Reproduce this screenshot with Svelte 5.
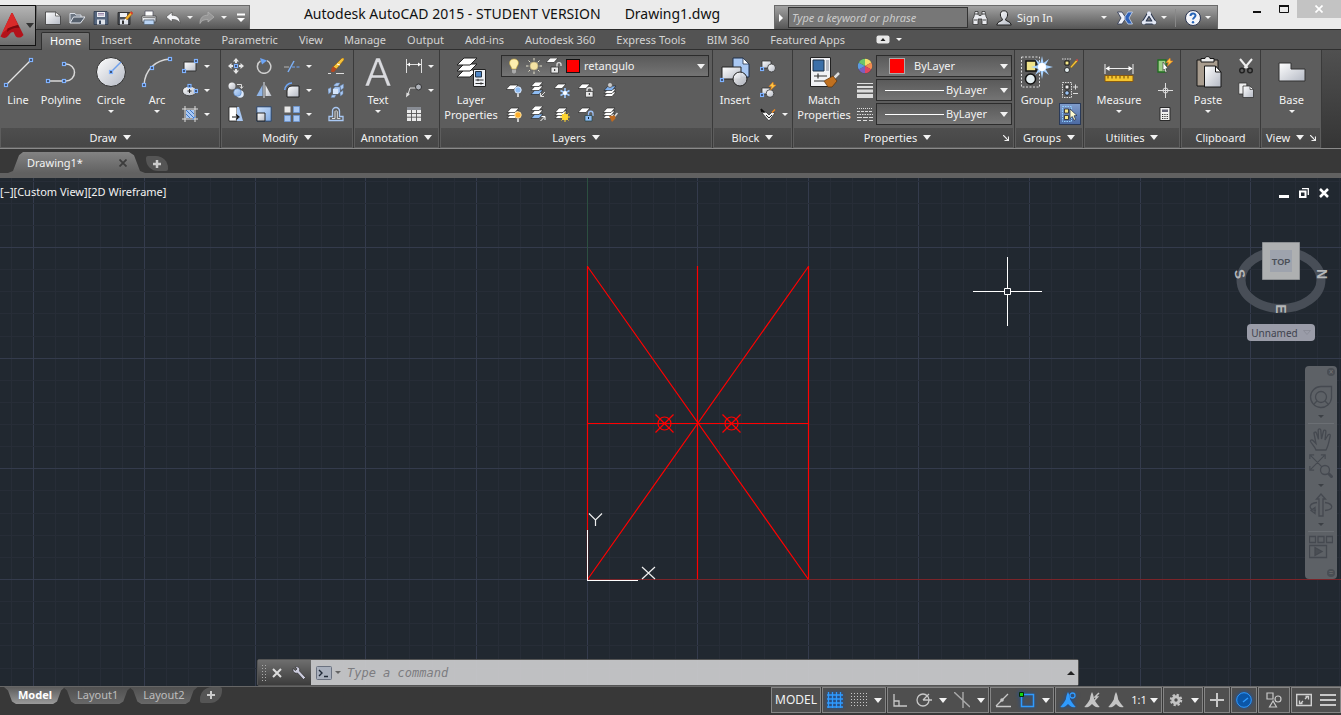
<script>
  // Inner markup of every icon. Small ones live in a 16x16 box, big ones in 32x32.
  const grip = (x, y) =>
    `<rect x="${x - 1.5}" y="${y - 1.5}" width="3" height="3" fill="#33415c" stroke="#7fb2ff" stroke-width="1.2"/>`;
  const sheet = (x, y, fill = '#fff') =>
    `<path d="M${x + 4} ${y}h8l-4 4.500h-8z" fill="${fill}" stroke="#2a2a2a" stroke-width=".7"/>`;
  const stack = (fill = '#fff') => sheet(1, 8, fill) + sheet(1, 5) + sheet(1, 2);
  const man = (c) =>
    `<path d="M8 0c1.500 3 1.800 5 2.200 7.500 1.500 3 3.500 5 5.500 7.500-2 .6-4 .3-5.500-1L8 12l-2.200 2c-1.500 1.300-3.500 1.600-5.500 1 2-2.500 4-4.500 5.500-7.500C6.200 5 6.500 3 8 0z" fill="${c}"/>`;

  const icons = {
    // quick access toolbar
    new: '<path d="M.5 2h10l5 4v8.500H.5z" fill="url(#metal)" stroke="#3a3a3a" stroke-width=".8"/><path d="M10.500 2v4h5z" fill="#fff" stroke="#555" stroke-width=".8"/>',
    open: '<path d="M1 13V3.500h5l1 1.500h5v2" fill="#6c7683" stroke="#d7dce4"/><path d="M1 13l3.500-6H16l-4.500 6z" fill="#56606d" stroke="#e3e7ee"/>',
    save: '<path d="M1 1.500h13l1 1V14.500H1z" fill="#56677f" stroke="#2e3a4c" stroke-width=".8"/><path d="M4 2h8v5H4z" fill="#eef0f4"/><path d="M5 3.500h6M5 5h6" stroke="#98a"/><path d="M4 9.500h8v5H4z" fill="#dfe3ea"/><path d="M6 10.500h2V14H6z" fill="#35455c"/>',
    saveas: '<path d="M1 2.500h12V14.500H1z" fill="#4a4f57" stroke="#222" stroke-width=".8"/><path d="M3 3h7v4H3z" fill="#eef0f4"/><path d="M3 9.500h8v5H3z" fill="#dfe3ea"/><path d="M5 10.500h2V14H5z" fill="#333"/><path d="M8 8.500L14 1.500l2 1.700L10 10z" fill="#f3b52b" stroke="#8a4a12" stroke-width=".6"/><path d="M14 1.500l2 1.700-1 1.200-2-1.700z" fill="#d33"/><path d="M8 8.500L7.500 11 10 10z" fill="#fff"/>',
    print: '<path d="M4 6V1h8v5" fill="#fff" stroke="#556" stroke-width=".8"/><path d="M1 6h14v6H1z" fill="url(#metal)" stroke="#444" stroke-width=".8"/><path d="M3 10h10v4.500H3z" fill="#b9d4f5" stroke="#567" stroke-width=".8"/><path d="M2 7.500h12" stroke="#888"/>',
    undo: '<path d="M1 7l6-5v3.200c5 0 8 2.300 8 8.300-1.500-3-3.500-4-8-4V12z" fill="#f4f5f8" stroke="#555" stroke-width=".7"/>',
    redo: '<path d="M15 7L9 2v3.200c-5 0-8 2.300-8 8.300 1.500-3 3.500-4 8-4V12z" fill="#969696" stroke="#b4b4b4" stroke-width=".7"/>',
    custom: '<path d="M4 4.500h8" stroke="#fff" stroke-width="2"/><path d="M4 8h8l-4 4z" fill="#fff"/>',
    // info center
    binoculars: '<path d="M3 1.500h3v3l1 1h2l1-1v-3h3l1 5 1 2v6h-5V9H6v5.500H1v-6l1-2z" fill="#e9eaee" stroke="#333" stroke-width=".8"/><path d="M2 10h3M11 10h3M3 4h3M10 4h3" stroke="#444"/>',
    user: '<path d="M8 .8c2.800 0 3.800 2 3.600 4.200C11.400 7 10.500 8 9.700 9v1.200L14 12.500l1.300 2.500H.7L2 12.500l4.300-2.300V9C5.500 8 4.600 7 4.400 5 4.200 2.800 5.200.8 8 .8z" fill="url(#metal)" stroke="#222"/>',
    exchange: '<path d="M.5 2H5l3 4.500v3L5 14H.5L4 8z" fill="#eef1f8" stroke="#2b3550" stroke-width=".8"/><path d="M15.500 2H11L8 6.500v3l3 4.500h4.500L12 8z" fill="#2f62b8" stroke="#cfdaf0" stroke-width=".8"/>',
    a360: '<path d="M8 3.500L2.500 12.500h11z" fill="none" stroke="#27344e" stroke-width="4" stroke-linejoin="round"/><path d="M8 3.500L2.500 12.500h11z" fill="none" stroke="#e4e9f5" stroke-width="2" stroke-linejoin="round"/><circle cx="8" cy="3.200" r="2" fill="#e4e9f5"/><circle cx="2.800" cy="12.500" r="2" fill="#e4e9f5"/><circle cx="13.200" cy="12.500" r="2" fill="#e4e9f5"/>',
    help: '<circle cx="8" cy="8" r="7.500" fill="#f5f6fa" stroke="#2b3550"/><path d="M5.500 6c0-3.400 5-3.400 5-.4 0 1.900-2.500 1.900-2.500 4" fill="none" stroke="#2765b8" stroke-width="2"/><circle cx="8" cy="12.200" r="1.200" fill="#2765b8"/>',
    // draw
    line: '<path d="M4 29L29 4" stroke="#e4e4e4" stroke-width="1.300"/>' + grip(4, 29) + grip(29, 4),
    polyline: '<path d="M3 25h18a8.500 8.500 0 0 0 0-17h-2" fill="none" stroke="#d8d8d8" stroke-width="1.500"/>' + grip(3, 25) + grip(19, 25) + grip(19, 8),
    circle: '<circle cx="16" cy="16" r="14.500" fill="url(#metal)" stroke="#2f2f2f"/><path d="M16 16L26 6" stroke="#6d9fee" stroke-width="1.400"/>' + grip(16, 16),
    arc: '<path d="M3 29C4 14 14 4 29 3" fill="none" stroke="#d8d8d8" stroke-width="1.500"/>' + grip(3, 29) + grip(11, 12) + grip(29, 3),
    rect: '<path d="M2 4h12v9H2z" fill="url(#metal)" stroke="#333"/>' + grip(2, 13) + grip(14, 3),
    ellipse: '<ellipse cx="7.500" cy="9" rx="7" ry="4.800" fill="url(#metal)" stroke="#333" stroke-width=".8"/><path d="M5.500 9h4M7.500 7v4" stroke="#222"/>' + grip(7.5, 4) + grip(14, 9),
    hatch: '<path d="M3 0v16M13 0v16M0 3h16M0 13h16" stroke="#e0e0e0"/><path d="M4 4h8v8H4z" fill="#a9c8f3"/><path d="M4 8l4 4M4 4l8 8M8 4l4 4" stroke="#3f76c4"/><path d="M10 14l4-4" stroke="#5c9bf5"/>',
    // modify
    move: '<path d="M8 0l3 3.500H9V5H7V3.500H5zM8 16l3-3.500H9V11H7v1.500H5zM0 8l3.500-3v2H5v2H3.500v2zM16 8l-3.500-3v2H11v2h1.500v2z" fill="#e6e6e6"/>' + grip(8, 8),
    copy: '<circle cx="4" cy="4" r="3.500" fill="url(#metal)"/><circle cx="12" cy="12" r="3.800" fill="#dce9fb"/><circle cx="9.500" cy="10.500" r="3.800" fill="url(#blue)" stroke="#4d7cc0" stroke-width=".5"/><path d="M9 2.500h4.500V6M12 4.500l1.500 2 1.500-2" fill="none" stroke="#ddd"/>',
    stretch: '<path d="M1 1h8v14H1z" fill="#fff" stroke="#222" stroke-width=".8"/><path d="M9 1h2l4 14H9z" fill="#a9c8f3"/><path d="M4 11h6M8 8.500l3 2.500-3 2.500" fill="none" stroke="#111" stroke-width="1.200"/>',
    rotate: '<path d="M4.500 3a6.700 6.700 0 1 0 6.500-.4" fill="none" stroke="#cfcfcf" stroke-width="1.500"/><path d="M4 0l7 2.500-5 4z" fill="#6ea5f5"/>',
    mirror: '<path d="M6.500 3v11H.5z" fill="#8fb5e8"/><path d="M9.500 3v11h6z" fill="url(#metal)"/><path d="M8 0v16" stroke="#dfe6f0"/>',
    scale: '<path d="M.8.800h14.400v14.400H.8z" fill="url(#blue)" stroke="#2c4468"/><path d="M1 7h8v8H1z" fill="url(#metal)" stroke="#222"/>',
    trim: '<path d="M0 9h5" stroke="#b5b5b5"/><path d="M8 9h8" stroke="#6ea5f5" stroke-dasharray="3 1.500"/><path d="M4 14L10 3" stroke="#7db0f5" stroke-width="1.500"/>',
    fillet: '<path d="M3 15V9c0-3 2-5 5-5h7v11z" fill="url(#metal)" stroke="#222"/><path d="M.8 8C1 4 4 1 8 1" fill="none" stroke="#6ea5f5" stroke-width="1.600"/>',
    array: '<path d="M.5.500h6v6h-6z" fill="#e8e8e8"/><path d="M9.500.500h6v6h-6zM.5 9.500h6v6h-6zM9.500 9.500h6v6h-6z" fill="#a9c8f3" stroke="#6b97d6" stroke-width=".8"/>',
    erase: '<path d="M5 9L14 0h2v2L8.500 11z" fill="#f5c13a" stroke="#8a5a10" stroke-width=".6"/><path d="M9 6l3 1" stroke="#fff"/><path d="M5 8.500L8.500 11 6 14H3.500c-1-1 0-4 1.500-5.500z" fill="#b5471f"/><path d="M0 15.500h3M8 15.500h8" stroke="#ddd"/>',
    explode: '<path d="M6 3l2.500-2H12l-2 3H6zM12 4l3.500-2v4L13 8zM5 7l2-2h5v5l-2 2H5zM0 7l3-1.500V10L.5 12zM4 13h4l-1.500 2.500H3zM12 10.500l3-2V12l-2.500 2z" fill="#a9c8f3" stroke="#6486b3" stroke-width=".5"/><path d="M5 7h5v5H5z" fill="#d6e6fb"/>',
    offset: '<path d="M1 14.500h14v-4h-3.500V5a3.500 3.500 0 0 0-7 0v5.500H1z" fill="none" stroke="#a9c8f3" stroke-width="1.300"/><path d="M4 12.500h3V5.500a1.300 1.300 0 0 1 2.300 0v7h3" fill="none" stroke="#ddd"/>',
    // annotation
    text: '<path d="M3 30L14 2h4l11 28h-4l-3-8H10l-3 8zM11 19h10L16 6z" fill="#d9dade" stroke="#444" stroke-width=".4"/>',
    dim: '<path d="M.5 1v14M15.500 1v14" stroke="#ddd"/><path d="M1 6.500h14" stroke="#ddd"/><path d="M1 6.500l3-2v4zM15 6.500l-3-2v4z" fill="#fff"/>',
    leader: '<path d="M1.500 14L4 6h6" fill="none" stroke="#ddd"/><path d="M0 15.500l.5-5L4 12z" fill="#ddd"/><circle cx="12.500" cy="5" r="3" fill="#aeb2ba" stroke="#333"/>',
    table: '<path d="M1 1h14v14H1z" fill="#e9e9e9"/><path d="M1 1h14v3H1z" fill="#888c94"/><path d="M1 7.500h14M1 11.200h14M5.500 4v11M10.500 4v11" stroke="#555" stroke-width=".9"/>',
    // layers
    layerprops: '<path d="M9 14h13l-7 7H2z" fill="#fff" stroke="#222"/><path d="M9 8h13l-7 7H2z" fill="#fff" stroke="#222"/><path d="M9 2h13l-7 7H2z" fill="#fff" stroke="#222"/><path d="M18.500 13.500h12v17h-12z" fill="#eef0f4" stroke="#222"/><path d="M20.500 15.500h6v5.500h-6z" fill="#4f86c6" stroke="#234"/><path d="M20.500 24h8M20.500 27.500h8M23 22.800v2.400M26 26.300v2.400" stroke="#333"/>',
    bulb: '<path d="M8 1c4.500 0 5.500 4.500 3.300 7L10 11H6L4.700 8C2.500 5.500 3.500 1 8 1z" fill="#fdeeb0" stroke="#c9a93c" stroke-width=".6"/><path d="M6 11.500h4v3l-2 1.300-2-1.300z" fill="#aaa"/>',
    sun: '<path d="M8 0v16M0 8h16M2.500 2.500l11 11M13.500 2.500l-11 11" stroke="#e6e3cf" stroke-dasharray="2.500 11"/><circle cx="8" cy="8" r="4" fill="#f5e3a3" stroke="#b8a878" stroke-width=".7"/>',
    unlock: sheet(0, 0) + '<path d="M11 9V6.500c0-2.500 4-2.500 4 0V8" fill="none" stroke="#ddd" stroke-width="1.300"/><path d="M5 9h7.500v6H5z" fill="#e8e8e8" stroke="#333" stroke-width=".8"/><path d="M8.700 11v2" stroke="#222"/>',
    layoff: sheet(0, 3) + '<circle cx="12" cy="8" r="3.200" fill="#8dbbf2" stroke="#dcebff"/><path d="M12 11.500V15" stroke="#ccc" stroke-width="2"/>',
    layiso: sheet(1, 8, '#8dbbf2') + sheet(1, 4) + sheet(1, 0) + '<path d="M15 10l-4 4M10.500 11v3.500H14" fill="none" stroke="#ddd"/>',
    layfrz: sheet(0, 2) + '<path d="M11 6v10M6.500 8.500l9 5M6.500 13.500l9-5" stroke="#9cc8ff" stroke-width="1.600"/><circle cx="11" cy="11" r="2" fill="#fff"/>',
    laylock: sheet(0, 2) + '<path d="M9 10V8c0-3 5-3 5 0v2" fill="none" stroke="#ddd" stroke-width="1.400"/><path d="M7.500 9.500h7.500V15H7.500z" fill="#e8e8e8" stroke="#333" stroke-width=".7"/><path d="M11.300 11v2" stroke="#222"/>',
    laycur: sheet(2, 10) + sheet(2, 7) + sheet(2, 4, '#7fb0ee') + '<circle cx="8" cy="3" r="2.500" fill="#ccc" stroke="#444" stroke-width=".7"/>',
    layon: stack() + '<circle cx="12" cy="9" r="3.200" fill="#ffb02e" stroke="#ffe2a0"/><path d="M12 12.500V16" stroke="#ccc" stroke-width="2"/>',
    layuniso: sheet(1, 8, '#8dbbf2') + sheet(1, 4) + sheet(1, 0) + '<path d="M10.500 15l4-4M11.500 10.500H15V14" fill="none" stroke="#fff"/>',
    laythaw: stack() + '<circle cx="11" cy="11" r="3.200" fill="#ffd52e"/><path d="M11 6v10M6 11h10M7.500 7.500l7 7M14.500 7.500l-7 7" stroke="#ffd52e"/>',
    layunlock: sheet(0, 2) + '<path d="M10.500 10V7.500c0-3 4.500-3 4.500 0V10" fill="none" stroke="#9cc0f5" stroke-width="1.300"/><path d="M7 9.500h7V15H7z" fill="#8dbbf2" stroke="#244" stroke-width=".7"/><path d="M10.500 11v2" stroke="#123"/>',
    laymatch: stack() + '<path d="M15.500 7l-3 3.500" stroke="#ddd" stroke-width="1.500"/><path d="M7 10l6-.5.5 3-3.500 3.500z" fill="#c06a1f"/>',
    // block
    insert: '<path d="M14 2h10l6 6v13H14z" fill="#a9c8f3" stroke="#1f2f48"/><path d="M24 2v6h6z" fill="#fff" stroke="#1f2f48" stroke-width=".8"/><path d="M3 11h19v12H3z" fill="url(#metal)" stroke="#222"/><circle cx="21" cy="23" r="7" fill="url(#metal)" stroke="#222" fill-opacity=".9"/>' + grip(3, 24),
    create: '<path d="M2 3h9v7H2z" fill="url(#metal)" stroke="#333" stroke-width=".8"/><circle cx="11.500" cy="10" r="4" fill="url(#metal)" stroke="#333" stroke-width=".8"/>' + grip(2, 11),
    editblock: '<path d="M2 6h8v6H2z" fill="url(#metal)" stroke="#333" stroke-width=".8"/><circle cx="10" cy="11.500" r="3.800" fill="url(#metal)" stroke="#333" stroke-width=".8"/><path d="M13 0l-4 4.500h2.500L10.500 8l5.500-5h-2.500z" fill="#ffc845" stroke="#e07b1a" stroke-width=".6"/>' + grip(2, 13),
    attr: '<path d="M1 3l4 4M1 3l1 3" stroke="#111" stroke-width="1.500"/><path d="M2 7l4-1 3 3 3-3 3 1-6 8z" fill="#f2f2f2" stroke="#333" stroke-width=".8"/><path d="M6 9l3 3 3-3" fill="none" stroke="#222"/><path d="M11.500 6l3-3 1 1-3 3z" fill="#f58b1f"/>',
    // properties
    match: '<path d="M2.500 1.500h20v29h-20z" fill="#f1f2f5" stroke="#222"/><path d="M5 4h11v11H5z" fill="#3b6fa8" stroke="#1c3147"/><path d="M18 4h3v11h-3z" fill="#b7bbc4"/><path d="M6 20h13M6 25h10M10 17.500v5" stroke="#333" stroke-width="1.200"/><path d="M31 17l-5 5" stroke="#ddd" stroke-width="2.500"/><path d="M16 25l9-5 4 5-5 6h-4z" fill="#c0701f" stroke="#5a3008" stroke-width=".7"/>',
    wheel: '<circle cx="8" cy="8" r="7.500" fill="#444"/><path d="M8 8V.8a7 7 0 0 1 6.300 3.700z" fill="#f4e06a"/><path d="M8 8l6.300-3.500a7 7 0 0 1-.1 7z" fill="#f28b50"/><path d="M8 8l6.200 3.500A7 7 0 0 1 8 15.200z" fill="#e2465f"/><path d="M8 8v7.200a7 7 0 0 1-6.300-3.700z" fill="#7a5fc0"/><path d="M8 8l-6.300 3.500a7 7 0 0 1 .1-7z" fill="#5b9be0"/><path d="M8 8L1.800 4.500A7 7 0 0 1 8 .8z" fill="#6cc56a"/>',
    weight: '<path d="M0 1.500h16" stroke="#ddd"/><path d="M0 5h16" stroke="#ddd" stroke-width="2"/><path d="M0 9h16" stroke="#ddd" stroke-width="3"/><path d="M0 14h16" stroke="#ddd" stroke-width="4"/>',
    linetype: '<g stroke="#ddd"><path d="M0 2.500h16" stroke-dasharray="1 1"/><path d="M0 5.500h16" stroke-dasharray="3 1"/><path d="M0 8.500h16" stroke-dasharray="1.500 1"/><path d="M0 11.500h16" stroke-dasharray="5 1"/><path d="M0 14.500h16" stroke-dasharray="4 2"/></g>',
    // groups
    group: '<path d="M.5 1h18v30H.5z" fill="none" stroke="#ddd" stroke-dasharray="2 1.500"/><path d="M5 5h10v10H5z" fill="#f0e48a" stroke="#111" stroke-width="1.500"/><circle cx="9.500" cy="23" r="5" fill="#e4eef0" stroke="#111" stroke-width="1.500"/><path d="M21 0l1.500 7L28 3l-3.500 6 7.500 2-7.500 2L28 19l-5.500-4L21 23l-1.500-8L14 19l3.500-6-7.500-2 7.500-2L14 3l5.500 4z" fill="#a8d2ff"/><circle cx="21" cy="11" r="4" fill="#fff"/>',
    ungroup: '<path d="M0 1h9" stroke="#ddd" stroke-dasharray="1.500 1"/><path d="M3 3h4v4H3z" fill="#f5e88b" stroke="#111"/><circle cx="5" cy="12" r="2.500" fill="#e4eef0" stroke="#111" stroke-width=".8"/><path d="M8 9l6-7 1.500 1.500-6 6.500z" fill="#f0c23a" stroke="#7a5210" stroke-width=".5"/><path d="M14 2l1.500 1.500 1-1L15 .8z" fill="#d44"/>',
    groupedit: '<path d="M.5.500h9v15h-9z" fill="none" stroke="#ddd" stroke-dasharray="1.500 1"/><path d="M3 3h4v4H3z" fill="#eee" stroke="#222"/><circle cx="5" cy="11" r="2.300" fill="#9cc4f5" stroke="#222"/><path d="M11 5h5M13.500 2.500v5M11 11.500h5" stroke="#ddd"/>',
    groupsel: '<path d="M.5.500h9v15h-9z" fill="none" stroke="#8fd0ff" stroke-dasharray="1.500 1"/><path d="M2.500 3h4v4h-4zM2.500 9.500h4v4h-4z" fill="#f5e88b" stroke="#222" stroke-width=".8"/><path d="M8 3l7 6.500-3 .3 1.700 3.700-1.700.8-1.700-3.800L8 12.500z" fill="#fffbd0" stroke="#1b2a44" stroke-width=".7"/>',
    // utilities
    measure: '<path d="M2 8v10M30 8v10M3 12.500h26" stroke="#eee"/><path d="M2.500 12.500l4-2.500v5zM29.500 12.500l-4-2.500v5z" fill="#fff"/><path d="M2 19.500h28v6H2z" fill="#f3c52f" stroke="#8a5a10"/><path d="M5 20v2.500M9 20v2.500M13 20v2.500M17 20v2.500M21 20v2.500M25 20v2.500" stroke="#6a4408"/>',
    qselect: '<path d="M1 2h8v12H1z" fill="#9fcf8a" stroke="#1f6f1f" stroke-width="1.300"/><path d="M13 0l-4 4.500h2.500L10.500 8l5.500-5h-2.500z" fill="#ffc845" stroke="#e07b1a" stroke-width=".6"/><path d="M6 4l5 6.500-2.200.2L10 14l-1.500.6L7.200 11 6 12.500z" fill="#fff" stroke="#333" stroke-width=".6"/>',
    point: '<path d="M8.500 1v15M1 8.500h15" stroke="#ddd"/><circle cx="8.500" cy="8.500" r="2.500" fill="none" stroke="#ddd"/>',
    calc: '<path d="M3 1.500h10v13H3z" fill="#f0f0f0" stroke="#2a2a2a"/><path d="M5 3.500h6V6H5z" fill="#667"/><path d="M5 8.500h6M5 10.500h6M5 12.500h6" stroke="#333" stroke-dasharray="1.300 1"/>',
    // clipboard
    paste: '<path d="M5 4h21v26H5z" fill="#a89c8e" stroke="#161616"/><path d="M9 2.500h4c0-2.500 5-2.500 5 0h4V6H9z" fill="#eee" stroke="#161616"/><path d="M12.500 10h11l5.500 6v15H12.500z" fill="url(#metal)" stroke="#161616"/><path d="M23.500 10v6H29z" fill="#fff" stroke="#161616"/>',
    cut: '<path d="M2 1l7.500 9M14 1L6.500 10" stroke="#eee" stroke-width="2"/><circle cx="4" cy="12.500" r="2.300" fill="none" stroke="#222" stroke-width="1.500"/><circle cx="12" cy="12.500" r="2.300" fill="none" stroke="#222" stroke-width="1.500"/>',
    copyclip: '<path d="M.8 1h8v11h-8z" fill="#eee" stroke="#333" stroke-width=".8"/><path d="M5 4h7l3.500 3.500V15.500H5z" fill="url(#metal)" stroke="#333" stroke-width=".8"/><path d="M12 4v3.500h3.500z" fill="#fff" stroke="#333" stroke-width=".7"/>',
    base: '<path d="M3 7h12v6h14v12H3z" fill="url(#metal)" stroke="#333"/>',
    // navigation bar
    steer: '<path d="M12 1.500h10.500V13A10.500 10.500 0 1 1 12 1.500z"/><circle cx="12" cy="12" r="5.500"/><path d="M4.500 19.500l3.500-3.500M19.500 19.500L16 16"/>',
    pan: '<path d="M7 23c-1-3-4-6-5.500-8.500-.5-1.500 1.500-2 2.500-1l3 3L5 6.500c-.3-1.800 2-2 2.500-.3l2 6-.3-9c0-1.700 2.400-1.700 2.600 0l.7 8.800 2-8c.4-1.500 2.500-1 2.400.5L16 13l3-5c1-1.300 2.700-.5 2.200 1-1 4-1.700 10-4.200 14z"/>',
    zoomext: '<path d="M2 2l17 17M18 2L2 18M1 6V1h5M14 1h5v5M1 14v5h5" transform="scale(.85)"/><circle cx="16" cy="16" r="4.500" fill="#5d6166"/><path d="M19.500 19.500l4 4" stroke-width="3"/>',
    orbit: '<path d="M10 23V6H7.500L12 1l4.500 5H14v17z"/><path d="M16 9.500c9 1.500 9 7 0 8M8 9.500c-9 1-9 7-1 8M6 14.500v6l-4-3z"/>',
    motion: '<path d="M.5 1.500h6v6h-6zM9 1.500h6v6H9zM17.500 1.500h6v6h-6zM.5 10.500h17v12h-17z"/><path d="M6 12.500v8l7-4z" fill="#4a4e54"/>',
    // status bar
    gridon: '<path d="M1.500 0v16M5.500 0v16M9.500 0v16M13.500 0v16M0 3h16M0 7h16M0 11h16M0 15h16" stroke="#2f9bff" stroke-width="1.300"/>',
    snap: '<path d="M0 1.500h16M0 4.500h16M0 7.500h16M0 10.500h16M0 13.500h16" stroke="#c8c8c8" stroke-dasharray="1 2"/>',
    ortho: '<path d="M2 2v12h13M2 9h5v5" fill="none" stroke="#c8c8c8" stroke-width="1.300"/>',
    polar: '<circle cx="7" cy="8" r="6" fill="none" stroke="#c8c8c8" stroke-width="1.300"/><path d="M7 8h9M7 8l6-6" stroke="#c8c8c8" stroke-width="1.300"/>',
    iso: '<path d="M0 0l16 15M9 0v16" stroke="#aaa" stroke-width="1.400"/>',
    otrack: '<path d="M1 14.500h15M1 14L13 2" stroke="#c8c8c8" stroke-width="1.300"/><circle cx="7" cy="8" r="1.800" fill="#c8c8c8"/>',
    osnap: '<path d="M2.500 2.500h12v12h-12z" fill="none" stroke="#2f9bff" stroke-width="1.500"/><path d="M.5.500h4v4h-4z" fill="#12d612" stroke="#052b05"/>',
    annovis: man('#2f9bff') + '<circle cx="12.500" cy="3.500" r="2.500" fill="none" stroke="#2f9bff" stroke-width="1.300"/>',
    annoauto: man('#c4c4c4') + '<path d="M15 1l-4 4h2.500L10 9" fill="none" stroke="#c4c4c4" stroke-width="1.500"/>',
    annoscale: man('#c4c4c4'),
    gear: '<circle cx="8" cy="8" r="5" fill="none" stroke="#c4c4c4" stroke-width="2.500" stroke-dasharray="2.200 1.727"/><circle cx="8" cy="8" r="3.200" fill="none" stroke="#c4c4c4" stroke-width="3"/>',
    plus: '<path d="M8 1v14M1 8h14" stroke="#c8c8c8" stroke-width="2"/>',
    hardware: '<circle cx="8" cy="8" r="7.300" fill="#0b56a8" stroke="#2f9bff"/><path d="M7 10l5-4" stroke="#2f9bff" stroke-width="1.500"/>',
    isolate: '<path d="M1 1h6v6H1zM7 9l-3.500 6h7z" fill="none" stroke="#c8c8c8" stroke-width="1.200"/><circle cx="12" cy="7" r="3" fill="none" stroke="#c8c8c8" stroke-width="1.200"/>',
    clean: '<path d="M.7 2.500h14.600v11H.7z" fill="none" stroke="#d0d0d0" stroke-width="1.400"/><path d="M9 7l3-3M9.500 4.500h3v3M7 9l-3 3M3.500 8.500v3h3" fill="none" stroke="#d0d0d0" stroke-width="1.300"/>',
    menu: '<path d="M0 3h16M0 8h16M0 13h16" stroke="#c8c8c8" stroke-width="2"/>'
  };

  const tabs = ['Home', 'Insert', 'Annotate', 'Parametric', 'View', 'Manage', 'Output', 'Add-ins', 'Autodesk 360', 'Express Tools', 'BIM 360', 'Featured Apps'];
  const layerTools = ['layoff', 'layiso', 'layfrz', 'laylock', 'laycur', 'layon', 'layuniso', 'laythaw', 'layunlock', 'laymatch'];
  const layouts = ['Model', 'Layout1', 'Layout2'];

  const statusGroups = [
    ['gridon', 'snap', '>'],
    ['ortho', 'polar', '>', 'iso', '>'],
    ['otrack', 'osnap', '>'],
    ['annovis', 'annoauto', 'annoscale', '1:1'],
    ['gear', '>'],
    ['plus'],
    ['hardware'],
    ['isolate'],
    ['clean', 'menu']
  ];
  const litItems = ['gridon', 'osnap', 'annovis', 'hardware'];

  let activeTab = $state('Home');
  let activeLayout = $state('Model');
  let command = $state('');

  // drawing grid, counted from the UCS origin
  const origin = { x: 587, y: 401 };
  const step = 22.13;
  let canvasWidth = $state(1341);
  let canvasHeight = $state(508);

  function gridLines(start, size, snap) {
    const lines = [];
    for (let i = -Math.floor(start / step); start + i * step < size; i++) {
      lines.push({ at: snap(start + i * step) + 0.5, major: i % 5 === 0 });
    }
    return lines;
  }

  let columns = $derived(gridLines(origin.x, canvasWidth, Math.floor));
  let rows = $derived(gridLines(origin.y, canvasHeight, Math.round));
</script>

{#snippet icon(name, size)}
  <svg width={size} height={size} viewBox="0 0 {size} {size}" aria-hidden="true">{@html icons[name]}</svg>
{/snippet}

{#snippet big(name, label, caret)}
  <button class="big">
    {@render icon(name, 32)}
    <span>{label}</span>
    {#if caret}<i class="caret"></i>{/if}
  </button>
{/snippet}

{#snippet small(name, caret)}
  <button class="small" aria-label={name}>
    <span class="glyph">{@render icon(name, 16)}</span>
    {#if caret}<i class="caret"></i>{/if}
  </button>
{/snippet}

{#snippet title(label, caret, launcher)}
  <footer>
    <span>{label}</span>
    {#if caret}<i class="caret wide"></i>{/if}
    {#if launcher}
      <svg class="launcher" width="6" height="6" viewBox="0 0 6 6"><path d="M0 0l5 5M5.500 1.500v4h-4" fill="none" stroke="#eee" stroke-width="1.200" /></svg>
    {/if}
  </footer>
{/snippet}

<svg class="defs" width="0" height="0" aria-hidden="true">
  <defs>
    <linearGradient id="metal" x1="0" y1="0" x2="1" y2="1">
      <stop offset="0" stop-color="#fff" />
      <stop offset="1" stop-color="#b4b9c4" />
    </linearGradient>
    <linearGradient id="blue" x1="0" y1="0" x2="1" y2="1">
      <stop offset="0" stop-color="#cfe2fb" />
      <stop offset="1" stop-color="#7ea9e2" />
    </linearGradient>
  </defs>
</svg>

<div class="app">
  <header class="titlebar">
    <button class="appmenu" aria-label="Application menu">
      <svg width="24" height="26" viewBox="0 0 24 26">
        <path d="M11.500 0h1L23.500 22c-2 3-6 3.500-8 1l-2-4-2.500.500-3 3.500c-2 2.500-5 2.500-7.500.500z" fill="#b3121a" />
        <path d="M11.500 0L.5 23.500C4 17 9 14.500 18 12L12.500 0z" fill="#d92a2a" />
        <path d="M7.500 15.500c3-1.500 7-2.500 10.500-3.500l1.500 3c-4-1-9 1-12.500 4z" fill="#7d0a10" />
      </svg>
      <i class="caret wide"></i>
    </button>
    <div class="quick">
      {#each ['new', 'open', 'save', 'saveas', 'print'] as name}
        <button class="tool" aria-label={name}>{@render icon(name, 16)}</button>
      {/each}
      <button class="tool" aria-label="undo">{@render icon('undo', 16)}</button>
      <i class="caret"></i>
      <button class="tool" aria-label="redo">{@render icon('redo', 16)}</button>
      <i class="caret"></i>
      <button class="tool" aria-label="customize">{@render icon('custom', 16)}</button>
    </div>
    <h1><span>Autodesk AutoCAD 2015 - STUDENT VERSION</span><span>Drawing1.dwg</span></h1>
    <div class="info">
      <i class="expand"></i>
      <input aria-label="Search" placeholder="Type a keyword or phrase" />
      <button class="tool" aria-label="search">{@render icon('binoculars', 16)}</button>
      <button class="tool sign">{@render icon('user', 16)}<span>Sign In</span></button>
      <i class="caret"></i>
      <button class="tool" aria-label="exchange">{@render icon('exchange', 16)}</button>
      <button class="tool" aria-label="a360">{@render icon('a360', 16)}</button>
      <i class="caret"></i>
      <span class="divider"></span>
      <button class="tool" aria-label="help">{@render icon('help', 16)}</button>
      <i class="caret"></i>
    </div>
    <div class="window">
      <button aria-label="Minimize"><svg width="10" height="10" viewBox="0 0 10 10"><path d="M1 8h8" stroke="#111" stroke-width="2" /></svg></button>
      <button aria-label="Maximize"><svg width="10" height="8" viewBox="0 0 10 8"><path d="M.5 1h9v6.500h-9z" fill="none" stroke="#111" /><path d="M0 1h10" stroke="#111" stroke-width="2" /></svg></button>
      <button class="close" aria-label="Close"><svg width="8" height="8" viewBox="0 0 8 8"><path d="M.5.500l7 7M7.500.500l-7 7" stroke="#fff" stroke-width="1.700" /></svg></button>
    </div>
  </header>

  <nav class="tabs">
    {#each tabs as tab}
      <button class:active={tab === activeTab} onclick={() => (activeTab = tab)}>{tab}</button>
    {/each}
    <button class="collapse" aria-label="Minimize ribbon">
      <svg width="14" height="9" viewBox="0 0 14 9"><rect x=".5" y=".5" width="13" height="8" rx="2" fill="#e8e8e8" /><path d="M4.500 6h5L7 3z" fill="#222" /></svg>
      <i class="caret"></i>
    </button>
  </nav>

  <div class="ribbon">
    <section class="panel draw">
      <div class="body">
        {@render big('line', 'Line')}
        {@render big('polyline', 'Polyline')}
        {@render big('circle', 'Circle', true)}
        {@render big('arc', 'Arc', true)}
        <div class="stack">
          {@render small('rect', true)}
          {@render small('ellipse', true)}
          {@render small('hatch', true)}
        </div>
      </div>
      {@render title('Draw', true)}
    </section>

    <section class="panel modify">
      <div class="body">
        <div class="stack">
          {#each ['move', 'copy', 'stretch'] as name}{@render small(name)}{/each}
        </div>
        <div class="stack">
          {#each ['rotate', 'mirror', 'scale'] as name}{@render small(name)}{/each}
        </div>
        <div class="stack">
          {#each ['trim', 'fillet', 'array'] as name}{@render small(name, true)}{/each}
        </div>
        <div class="stack">
          {#each ['erase', 'explode', 'offset'] as name}{@render small(name)}{/each}
        </div>
      </div>
      {@render title('Modify', true)}
    </section>

    <section class="panel annotation">
      <div class="body">
        {@render big('text', 'Text', true)}
        <div class="stack">
          {@render small('dim', true)}
          {@render small('leader', true)}
          {@render small('table')}
        </div>
      </div>
      {@render title('Annotation', true)}
    </section>

    <section class="panel layers">
      <div class="body">
        {@render big('layerprops', 'Layer Properties')}
        <div>
          <div class="combo">
            {@render icon('bulb', 16)}
            {@render icon('sun', 16)}
            {@render icon('unlock', 16)}
            <span class="swatch dark"></span>
            <select aria-label="Layer"><option>retangulo</option></select>
            <i class="caret wide"></i>
          </div>
          <div class="layertools">
            {#each layerTools as name}{@render small(name)}{/each}
          </div>
        </div>
      </div>
      {@render title('Layers', true)}
    </section>

    <section class="panel block">
      <div class="body">
        {@render big('insert', 'Insert')}
        <div class="stack">
          {@render small('create')}
          {@render small('editblock')}
          {@render small('attr', true)}
        </div>
      </div>
      {@render title('Block', true)}
    </section>

    <section class="panel properties">
      <div class="body">
        {@render big('match', 'Match Properties')}
        <div class="stack">
          {@render small('wheel')}
          {@render small('weight')}
          {@render small('linetype')}
        </div>
        <div class="combos">
          <div class="combo">
            <span class="swatch"></span>
            <select class="color" aria-label="Object color"><option>ByLayer</option></select>
            <i class="caret wide"></i>
          </div>
          <div class="combo">
            <span class="sample"></span>
            <select aria-label="Lineweight"><option>ByLayer</option></select>
            <i class="caret wide"></i>
          </div>
          <div class="combo">
            <span class="sample"></span>
            <select aria-label="Linetype"><option>ByLayer</option></select>
            <i class="caret wide"></i>
          </div>
        </div>
      </div>
      {@render title('Properties', true, true)}
    </section>

    <section class="panel groups">
      <div class="body">
        {@render big('group', 'Group')}
        <div class="stack">
          {@render small('ungroup')}
          {@render small('groupedit')}
          <div class="pressed">{@render small('groupsel')}</div>
        </div>
      </div>
      {@render title('Groups', true)}
    </section>

    <section class="panel utilities">
      <div class="body">
        {@render big('measure', 'Measure', true)}
        <div class="stack">
          {@render small('qselect')}
          {@render small('point')}
          {@render small('calc')}
        </div>
      </div>
      {@render title('Utilities', true)}
    </section>

    <section class="panel clipboard">
      <div class="body">
        {@render big('paste', 'Paste', true)}
        <div class="stack">
          {@render small('cut')}
          {@render small('copyclip')}
        </div>
      </div>
      {@render title('Clipboard')}
    </section>

    <section class="panel view">
      <div class="body">{@render big('base', 'Base', true)}</div>
      {@render title('View', true, true)}
    </section>
  </div>

  <div class="files">
    <div class="filetab">
      <span>Drawing1*</span>
      <button aria-label="Close drawing"><svg width="8" height="8" viewBox="0 0 8 8"><path d="M.5.500l7 7M7.500.500l-7 7" stroke="#3c3c3c" stroke-width="1.800" /></svg></button>
    </div>
    <button class="addfile" aria-label="New drawing"><svg width="8" height="8" viewBox="0 0 8 8"><path d="M4 0v8M0 4h8" stroke="#ccc" stroke-width="2.500" /></svg></button>
  </div>

  <main bind:clientWidth={canvasWidth} bind:clientHeight={canvasHeight}>
    <svg class="drawing" width="100%" height="100%">
      {#each columns as line}
        <line x1={line.at} x2={line.at} y1="0" y2="100%" stroke={line.major ? '#343b4c' : '#272d37'} />
      {/each}
      {#each rows as line}
        <line x1="0" x2="100%" y1={line.at} y2={line.at} stroke={line.major ? '#343b4c' : '#272d37'} />
      {/each}
      <line x1="587.5" x2="587.5" y1="0" y2="401" stroke="#2c4f40" />
      <line x1="587" x2="100%" y1="401.5" y2="401.5" stroke="#7a2429" />
      <g fill="none" stroke="#f00" stroke-width="1.2">
        <path d="M587.500 88v313M697.500 88v313M808.500 88v313M587 245.500h222" />
        <path d="M587.500 88.500l221 313M808.500 88.500l-221 313" />
        {#each [664.5, 731.5] as cx}
          <circle {cx} cy="245.5" r="6.5" />
          <path d="M{cx - 9} 236.500l18 18M{cx + 9} 236.500l-18 18" />
        {/each}
      </g>
      <path d="M587.500 352v50M587 402.500h51" stroke="#fff" fill="none" />
      <path d="M589 335.500l6.500 6.500 6.500-6.500M595.500 342v6M642 389l13 12M655 389l-13 12" fill="none" stroke="#eee" stroke-width="1.200" />
      <path d="M1007.500 79v31M1007.500 117v31M973 113.500h31M1011 113.500h31M1004.500 110.500h6v6h-6z" fill="none" stroke="#fff" />
    </svg>

    <div class="viewlabel">[−][Custom View][2D Wireframe]</div>

    <div class="viewport-buttons">
      <button aria-label="Minimize viewport"><svg width="10" height="10" viewBox="0 0 10 10"><path d="M0 8.500h10" stroke="#fff" stroke-width="3" /></svg></button>
      <button aria-label="Restore viewport"><svg width="10" height="10" viewBox="0 0 10 10"><path d="M3 .7h6.300V7" fill="none" stroke="#fff" stroke-width="1.300" /><path d="M1 3.500h5.500V9H1z" fill="none" stroke="#fff" stroke-width="2" /></svg></button>
      <button aria-label="Close viewport"><svg width="10" height="10" viewBox="0 0 10 10"><path d="M1 1l8 8M9 1L1 9" stroke="#fff" stroke-width="2.500" /></svg></button>
    </div>

    <div class="cube">
      <svg width="100" height="76" viewBox="0 0 100 76">
        <ellipse cx="50" cy="38" rx="40" ry="28.500" fill="none" stroke="#484e57" stroke-width="9" />
        <path d="M31.500.500h37v37h-37z" fill="#aeb0b1" stroke="#8b8e91" />
        <path d="M39 8h22v22H39z" fill="#9ea3ad" />
        <text x="50" y="23" text-anchor="middle" class="top">TOP</text>
        <text x="9" y="32" text-anchor="middle" transform="rotate(80 9 32)" dy="5">S</text>
        <text x="91" y="32" text-anchor="middle" transform="rotate(90 91 32)" dy="5">N</text>
        <text x="50" y="67" text-anchor="middle" transform="rotate(90 50 67)" dy="5">E</text>
      </svg>
      <button>Unnamed <svg width="8" height="5" viewBox="0 0 8 5"><path d="M.5.500h7L4 4.500z" fill="none" stroke="#8b8d98" /></svg></button>
    </div>

    <div class="navbar">
      <span class="dot">×</span>
      {#each ['steer', 'pan', 'zoomext', 'orbit', 'motion'] as name}
        <button class={name} aria-label={name}>
          <svg width="24" height="24" viewBox="0 0 24 24" fill="none" stroke="#454950" stroke-width="1.3">{@html icons[name]}</svg>
          {#if name !== 'pan' && name !== 'motion'}<i class="caret"></i>{/if}
        </button>
      {/each}
      <span class="dot end">=</span>
    </div>

    <div class="command">
      <div class="handle">
        <span class="dots"></span>
        <button aria-label="Close command line"><svg width="10" height="10" viewBox="0 0 10 10"><path d="M1 1l8 8M9 1L1 9" stroke="#ddd" stroke-width="2" /></svg></button>
        <button aria-label="Customize"><svg width="14" height="14" viewBox="0 0 14 14"><path d="M1 2.500l2.500 2L5 3 3 .800C6 0 8.500 2 7.500 5L13.500 11.500 11.500 13.500 5.500 7C3 8 .2 5.500 1 2.500z" fill="#ccd" stroke="#222" stroke-width=".6" /></svg></button>
      </div>
      <label>
        <svg width="16" height="14" viewBox="0 0 16 14"><rect x=".5" y=".5" width="15" height="13" rx="1" fill="#a9b0bd" stroke="#6b7280" /><path d="M3 4l3 3-3 3M8 10.500h4" fill="none" stroke="#1f2937" stroke-width="1.400" /></svg>
        <i class="caret"></i>
        <input aria-label="Command" placeholder="Type a command" bind:value={command} />
        <i class="caret up"></i>
      </label>
    </div>
  </main>

  <div class="statusbar">
    <div class="layouts">
      {#each layouts as layout}
        <button class:active={layout === activeLayout} onclick={() => (activeLayout = layout)}>{layout}</button>
      {/each}
      <button class="addlayout" aria-label="New layout"><svg width="8" height="8" viewBox="0 0 8 8"><path d="M4 0v8M0 4h8" stroke="#ccc" stroke-width="2" /></svg></button>
    </div>
    <div class="status">
      <div class="group"><button class="model">MODEL</button></div>
      {#each statusGroups as group}
        <div class="group">
          {#each group as item}
            {#if item === '>'}
              <button class="drop" aria-label="Options"><i class="caret wide"></i></button>
            {:else if item === '1:1'}
              <button class="ratio">1:1 <i class="caret wide"></i></button>
            {:else}
              <button class={item} class:lit={litItems.includes(item)} aria-label={item}>
                {@render icon(item, 16)}
              </button>
            {/if}
          {/each}
        </div>
      {/each}
    </div>
  </div>
</div>

<style>
  :global(body) {
    margin: 0;
    background: #383838;
  }
  .defs {
    position: absolute;
  }
  .app {
    display: flex;
    flex-direction: column;
    height: 100vh;
    overflow: hidden;
    font: 11px/16px "Noto Sans", "Open Sans", sans-serif;
    color: #f2f2f2;
  }
  button,
  input,
  select {
    margin: 0;
    padding: 0;
    border: 0;
    background: none;
    color: inherit;
    font: inherit;
  }
  svg {
    display: block;
    flex: none;
  }
  .caret {
    flex: none;
    width: 0;
    height: 0;
    border: 3px solid transparent;
    border-top-color: #f2f2f2;
    border-bottom: 0;
  }
  .caret.wide {
    border-width: 5px 4px 0;
  }
  .caret.up {
    border: 4px solid transparent;
    border-bottom-color: #222;
    border-top: 0;
  }

  /* title bar */
  .titlebar {
    position: relative;
    display: flex;
    height: 29px;
    background: #ebebeb;
  }
  .appmenu {
    position: absolute;
    z-index: 2;
    top: 5px;
    left: 0;
    display: flex;
    align-items: center;
    gap: 2px;
    width: 36px;
    height: 41px;
    border: 1px solid #111;
    border-left: 0;
    background: linear-gradient(#b4b4b4, #6c6c6c);
  }
  .appmenu .caret {
    border-top-color: #333;
  }
  .quick,
  .info {
    display: flex;
    align-items: center;
    box-sizing: border-box;
    margin-top: 5px;
    border: 1px solid #6a6a6a;
    border-bottom: 0;
    background: linear-gradient(#a2a2a2, #555);
  }
  .quick {
    width: 214px;
    margin-left: 36px;
    padding-left: 4px;
  }
  .quick .caret {
    margin: 0 2px;
  }
  .tool {
    display: flex;
    flex: none;
    justify-content: center;
    width: 24px;
  }
  h1 {
    display: flex;
    flex: 1;
    justify-content: center;
    gap: 24px;
    margin: 0;
    font: 14px/28px "Noto Sans", "Open Sans", sans-serif;
    color: #111;
    white-space: nowrap;
  }
  .info {
    width: 444px;
  }
  .expand {
    margin: 0 5px 0 4px;
    border: 4px solid transparent;
    border-left-color: #fff;
    border-right: 0;
  }
  .info input {
    flex: none;
    box-sizing: border-box;
    width: 180px;
    height: 21px;
    padding: 0 3px;
    border: 1px solid #333;
    background: #777;
    font-style: italic;
  }
  .info input::placeholder {
    color: #ccc;
    opacity: 1;
  }
  .sign {
    box-sizing: border-box;
    gap: 5px;
    justify-content: flex-start;
    width: 109px;
    padding-left: 4px;
  }
  .info .tool + .caret {
    margin-right: 6px;
  }
  .divider {
    width: 1px;
    height: 18px;
    margin: 0 5px 0 2px;
    background: #888;
  }
  .window {
    display: flex;
    align-items: flex-start;
    width: 123px;
    justify-content: flex-end;
  }
  .window button {
    display: flex;
    align-items: center;
    justify-content: center;
    width: 27px;
    height: 18px;
  }
  .window .close {
    width: 44px;
    background: #c3c3c3;
  }

  /* ribbon */
  .tabs {
    display: flex;
    gap: 1px;
    box-sizing: border-box;
    height: 21px;
    padding-left: 41px;
    border-top: 1px solid #2a2a2a;
    border-bottom: 1px solid #2f2f2f;
    background: #535353;
  }
  .tabs button {
    padding: 0 9px 1px;
    border: 1px solid transparent;
    border-bottom: 0;
    color: #d4d4d4;
    white-space: nowrap;
  }
  .tabs .active {
    height: 19px;
    margin-top: 2px;
    padding: 0 8px 4px;
    border-color: #2f2f2f;
    border-radius: 2px 2px 0 0;
    background: linear-gradient(#747474, #5d5d5d);
    color: #fff;
  }
  .tabs .collapse {
    display: flex;
    align-items: center;
    gap: 6px;
    margin-left: 10px;
  }
  .ribbon {
    display: flex;
    height: 98px;
    border-bottom: 1px solid #8a8a8a;
    background: linear-gradient(#505050, #353535);
  }
  .panel {
    display: flex;
    flex-direction: column;
    box-sizing: border-box;
    border-right: 1px solid #3a3a3a;
    background: #5d5d5d;
  }
  .body {
    display: flex;
    flex: 1;
    padding: 4px 0 0 1px;
  }
  .draw { width: 221px; }
  .modify { width: 133px; }
  .annotation { width: 86px; }
  .layers { width: 273px; }
  .block { width: 80px; }
  .properties { width: 222px; }
  .groups { width: 69px; }
  .utilities { width: 97px; }
  .clipboard { width: 80px; }
  .view { width: 61px; }
  .draw .body { display: grid; grid-template-columns: 36px 50px 50px 42px 36px; padding-left: 0; }
  .modify .body { display: grid; grid-template-columns: 24px 24px 40px 24px; gap: 4px; padding-left: 3px; }
  .annotation .body { padding-left: 0; }
  .annotation .big { width: 48px; }
  .layers .big,
  .properties .big,
  .view .big { width: 60px; }
  .block .big,
  .groups .big { width: 42px; }
  .utilities .big { width: 68px; }
  .clipboard .big { width: 52px; }
  .panel footer {
    position: relative;
    display: flex;
    align-items: center;
    justify-content: center;
    gap: 6px;
    height: 19px;
    margin: 0 1px 1px;
    background: linear-gradient(#4e4e4e, #464646);
    white-space: nowrap;
  }
  .launcher {
    position: absolute;
    right: 4px;
    top: 7px;
  }
  .properties footer,
  .view footer {
    padding-right: 12px;
  }
  .big {
    display: flex;
    flex-direction: column;
    align-items: center;
    align-self: start;
    padding-top: 2px;
    line-height: 15px;
  }
  .big span {
    margin-top: 4px;
  }
  .big .caret {
    margin-top: 3px;
  }
  .stack {
    display: grid;
    grid-auto-rows: 24px;
    align-content: start;
  }
  .small {
    display: flex;
    align-items: center;
    height: 24px;
  }
  .small .glyph {
    display: flex;
    justify-content: center;
    width: 24px;
  }
  .small .caret {
    margin-left: 2px;
  }
  .properties .glyph {
    width: 22px;
  }
  .pressed {
    box-sizing: border-box;
    height: 22px;
    margin: 1px;
    border: 1px solid #2a3a58;
    background: linear-gradient(#7f9ccb, #4b6aa3);
  }
  .pressed .small {
    width: 20px;
    height: 20px;
  }
  .pressed .glyph {
    width: 20px;
  }
  .layertools {
    display: grid;
    grid-template-columns: repeat(5, 24px);
    padding-left: 1px;
  }
  .combo {
    display: flex;
    align-items: center;
    gap: 4px;
    box-sizing: border-box;
    height: 22px;
    margin: 1px 1px 2px 0;
    padding: 0 3px 0 4px;
    border: 1px solid #2c2c2c;
    background: linear-gradient(#5a5a5a, #747474);
  }
  .layers .combo {
    width: 208px;
    margin-bottom: 1px;
  }
  .combos .combo {
    width: 136px;
  }
  .combo select {
    flex: 1;
    min-width: 0;
    appearance: none;
  }
  .swatch {
    box-sizing: border-box;
    width: 16px;
    height: 16px;
    margin-left: 8px;
    border: 1px solid #aaa;
    background: #f00;
  }
  .swatch.dark {
    width: 14px;
    height: 14px;
    margin: 0;
    border-color: #111;
  }
  .combo .color {
    margin-left: 5px;
  }
  .sample {
    width: 59px;
    height: 1px;
    margin-left: 4px;
    background: #fff;
  }
  .sample + select {
    margin-left: -2px;
  }

  /* file tabs */
  .files {
    display: flex;
    align-items: flex-end;
    box-sizing: border-box;
    height: 29px;
    padding-left: 8px;
    border-bottom: 5px solid #616161;
    background: #383838;
  }
  .filetab {
    display: flex;
    align-items: center;
    justify-content: space-between;
    box-sizing: border-box;
    width: 137px;
    height: 21px;
    padding: 0 18px 0 19px;
    background: linear-gradient(#838383, #616161);
    clip-path: polygon(0 100%, 5px 90%, 11px 15%, 15px 0, 121px 0, 126px 15%, 132px 90%, 137px 100%);
  }
  .addfile {
    display: flex;
    align-items: center;
    justify-content: center;
    width: 22px;
    height: 15px;
    margin: 0 0 2px 1px;
    border-radius: 2px 12px 2px 12px;
    background: #555;
  }

  /* drawing area */
  main {
    position: relative;
    flex: 1;
    min-height: 0;
    background: #212830;
  }
  .drawing {
    position: absolute;
    inset: 0;
  }
  .viewlabel {
    position: relative;
    padding-top: 6px;
  }
  .viewport-buttons {
    position: absolute;
    top: 10px;
    right: 12px;
    display: flex;
    gap: 10px;
  }
  .cube {
    position: absolute;
    top: 64px;
    right: 10px;
    display: flex;
    flex-direction: column;
    align-items: center;
    gap: 6px;
    width: 100px;
  }
  .cube text {
    font: bold 14px "Liberation Sans", sans-serif;
    fill: #b4b6b8;
  }
  .cube .top {
    font-size: 9px;
    fill: #4b5058;
  }
  .cube button {
    display: flex;
    align-items: center;
    gap: 5px;
    height: 17px;
    padding: 0 4px;
    border-radius: 4px;
    background: #9a9ca8;
    font-size: 10px;
    color: #3f434e;
  }
  .navbar {
    position: absolute;
    top: 188px;
    right: 4px;
    display: flex;
    flex-direction: column;
    align-items: center;
    box-sizing: border-box;
    width: 32px;
    height: 213px;
    padding: 2px;
    border-radius: 4px;
    background: #5d6166;
  }
  .navbar button {
    display: flex;
    flex-direction: column;
    align-items: center;
    gap: 6px;
    width: 26px;
    padding: 3px 0;
  }
  .navbar .steer,
  .navbar .orbit {
    padding-bottom: 5px;
    border-bottom: 1px solid #6b6f74;
  }
  .navbar .steer {
    margin-top: 6px;
  }
  .navbar .pan {
    padding-bottom: 0;
  }
  .navbar .caret {
    border-top-color: #3c4045;
  }
  .dot {
    align-self: flex-end;
    width: 8px;
    height: 8px;
    border-radius: 4px;
    background: #4a4e54;
    font-size: 8px;
    line-height: 8px;
    color: #777;
    text-align: center;
  }
  .dot.end {
    margin-top: auto;
  }
  .command {
    position: absolute;
    right: 262px;
    bottom: 0;
    left: 257px;
    display: flex;
    box-sizing: border-box;
    height: 27px;
    border: 1px solid #555;
    border-radius: 2px;
  }
  .handle {
    display: flex;
    align-items: center;
    gap: 10px;
    width: 53px;
    background: linear-gradient(#6e6e6e, #3c3c3c);
  }
  .dots {
    width: 6px;
    height: 17px;
    margin: 0 -5px 0 3px;
    background: radial-gradient(#aaa 1px, transparent 1px) 0 0 / 3px 3px;
  }
  .command label {
    display: flex;
    flex: 1;
    align-items: center;
    gap: 3px;
    padding: 0 3px 0 5px;
    background: rgba(200, 200, 202, 0.95);
  }
  .command label .caret {
    border-top-color: #666;
  }
  .command input {
    flex: 1;
    padding-left: 3px;
    font: italic 12px "DejaVu Sans Mono", monospace;
    color: #333;
    outline: none;
  }
  .command input::placeholder {
    color: #7c7c80;
    opacity: 1;
  }

  /* status bar */
  .statusbar {
    display: flex;
    justify-content: space-between;
    box-sizing: border-box;
    height: 29px;
    border-top: 1px solid #666;
    background: #383838;
  }
  .layouts {
    display: flex;
    align-items: flex-start;
    padding-left: 4px;
  }
  .layouts button {
    height: 17px;
    margin-right: -2px;
    padding: 0 13px 1px 14px;
    background: linear-gradient(#505050, #686868);
    clip-path: polygon(0 0, 100% 0, calc(100% - 4px) 20%, calc(100% - 8px) 85%, calc(100% - 12px) 100%, 12px 100%, 8px 85%, 4px 20%);
    color: #bdbdbd;
  }
  .layouts .active {
    background: linear-gradient(#5c5c5c, #9a9a9a);
    font-weight: bold;
    color: #fff;
  }
  .layouts .addlayout {
    width: 22px;
    height: 16px;
    margin-left: 4px;
    padding: 0 7px;
    border-radius: 12px 2px 12px 2px;
    background: #555;
    clip-path: none;
  }
  .status {
    display: flex;
    gap: 1px;
    align-items: flex-start;
  }
  .group {
    display: flex;
    box-sizing: border-box;
    height: 26px;
    border: 1px solid #858585;
    background: #4f4f4f;
  }
  .group button {
    display: flex;
    align-items: center;
    justify-content: center;
    width: 24px;
  }
  .group .model {
    width: 48px;
    font-size: 12px;
  }
  .group .drop {
    width: 14px;
  }
  .group .ratio {
    gap: 3px;
    width: 33px;
  }
  .group .isolate {
    width: 30px;
  }
  .lit {
    filter: drop-shadow(0 0 2px #0a4fb0);
  }
</style>
